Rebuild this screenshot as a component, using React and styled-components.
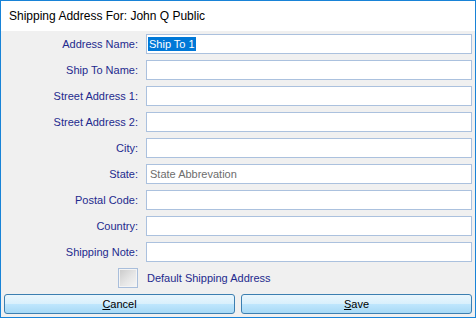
import React from 'react'
import styled, { createGlobalStyle } from 'styled-components'

const GlobalStyle = createGlobalStyle`
    html, body {
        margin: 0;
        padding: 0;
        background: #ffffff;
    }
    * {
        box-sizing: border-box;
    }
`

const StyledWindow = styled.div`
    width: 476px;
    height: 318px;
    border: 1px solid #1883d7;
    display: flex;
    flex-direction: column;
    background-color: #f0f0f0;
    font-family: 'Liberation Sans', Arial, sans-serif;
`

const StyledTitleBar = styled.div`
    height: 30px;
    background-color: #ffffff;
    display: flex;
    align-items: center;
    padding-left: 8px;
    padding-bottom: 1px;
    font-family: 'Liberation Sans', Arial, sans-serif;
    font-size: 12px;
    color: #000000;
`

const StyledBody = styled.div`
    flex: 1;
    padding: 3px 3px 3px 3px;
    display: flex;
    flex-direction: column;
    gap: 6px;
`

const StyledForm = styled.div`
    display: grid;
    grid-template-columns: 135px 1fr;
    column-gap: 7px;
    row-gap: 6px;
    align-items: center;
`

const StyledLabel = styled.label`
    text-align: right;
    font-size: 11px;
    color: #1e2a8e;
    padding-right: 1px;
`

const StyledInput = styled.div`
    height: 20px;
    border: 1px solid #abc1de;
    background-color: #ffffff;
    display: flex;
    align-items: center;
    padding-left: ${props => (props.$selected ? '1px' : '3px')};
    font-size: 11px;
    color: ${props => (props.$placeholder ? '#6d6d6d' : '#000000')};
`

const StyledSelection = styled.span`
    background-color: #0078d7;
    color: #ffffff;
    padding: 0 1px;
    line-height: 14px;
`

const StyledCheckCell = styled.div`
    display: flex;
    justify-content: flex-end;
    padding-right: 1px;
`

const StyledCheckbox = styled.div`
    width: 20px;
    height: 20px;
    border: 1px solid #a9bedb;
    box-shadow: inset 0 0 0 1px #f4f4f4;
    background: linear-gradient(135deg, #c9c9c9 0%, #e6e6e6 55%, #f6f6f6 100%);
`

const StyledCheckLabel = styled.span`
    font-size: 11px;
    color: #1e2a8e;
    padding-left: 1px;
`

const StyledButtons = styled.div`
    display: grid;
    grid-template-columns: 1fr 1fr;
    gap: 6px;
`

const StyledButton = styled.button`
    height: 20px;
    border: 1px solid #3c7fb1;
    border-radius: 3px;
    background: linear-gradient(#eaf6fd 0%, #d9f0fc 48%, #bee6fd 52%, #a7d9f5 100%);
    font-family: 'Liberation Sans', Arial, sans-serif;
    font-size: 11px;
    color: #000000;
    padding: 0;
    cursor: pointer;

    u {
        text-decoration: underline;
        text-underline-offset: 1px;
    }
`

const fields = [
    { label: 'Address Name:', value: 'Ship To 1', selected: true },
    { label: 'Ship To Name:' },
    { label: 'Street Address 1:' },
    { label: 'Street Address 2:' },
    { label: 'City:' },
    { label: 'State:', value: 'State Abbrevation', placeholder: true },
    { label: 'Postal Code:' },
    { label: 'Country:' },
    { label: 'Shipping Note:' },
]

const App = () => {
    return (
        <>
            <GlobalStyle />
            <StyledWindow>
                <StyledTitleBar>Shipping Address For: John Q Public</StyledTitleBar>
                <StyledBody>
                    <StyledForm>
                        {fields.map(field => (
                            <React.Fragment key={field.label}>
                                <StyledLabel>{field.label}</StyledLabel>
                                <StyledInput $selected={field.selected} $placeholder={field.placeholder}>
                                    {field.selected ? (
                                        <StyledSelection>{field.value}</StyledSelection>
                                    ) : (
                                        field.value
                                    )}
                                </StyledInput>
                            </React.Fragment>
                        ))}
                        <StyledCheckCell>
                            <StyledCheckbox />
                        </StyledCheckCell>
                        <StyledCheckLabel>Default Shipping Address</StyledCheckLabel>
                    </StyledForm>
                    <StyledButtons>
                        <StyledButton><u>C</u>ancel</StyledButton>
                        <StyledButton><u>S</u>ave</StyledButton>
                    </StyledButtons>
                </StyledBody>
            </StyledWindow>
        </>
    )
}

export default App
